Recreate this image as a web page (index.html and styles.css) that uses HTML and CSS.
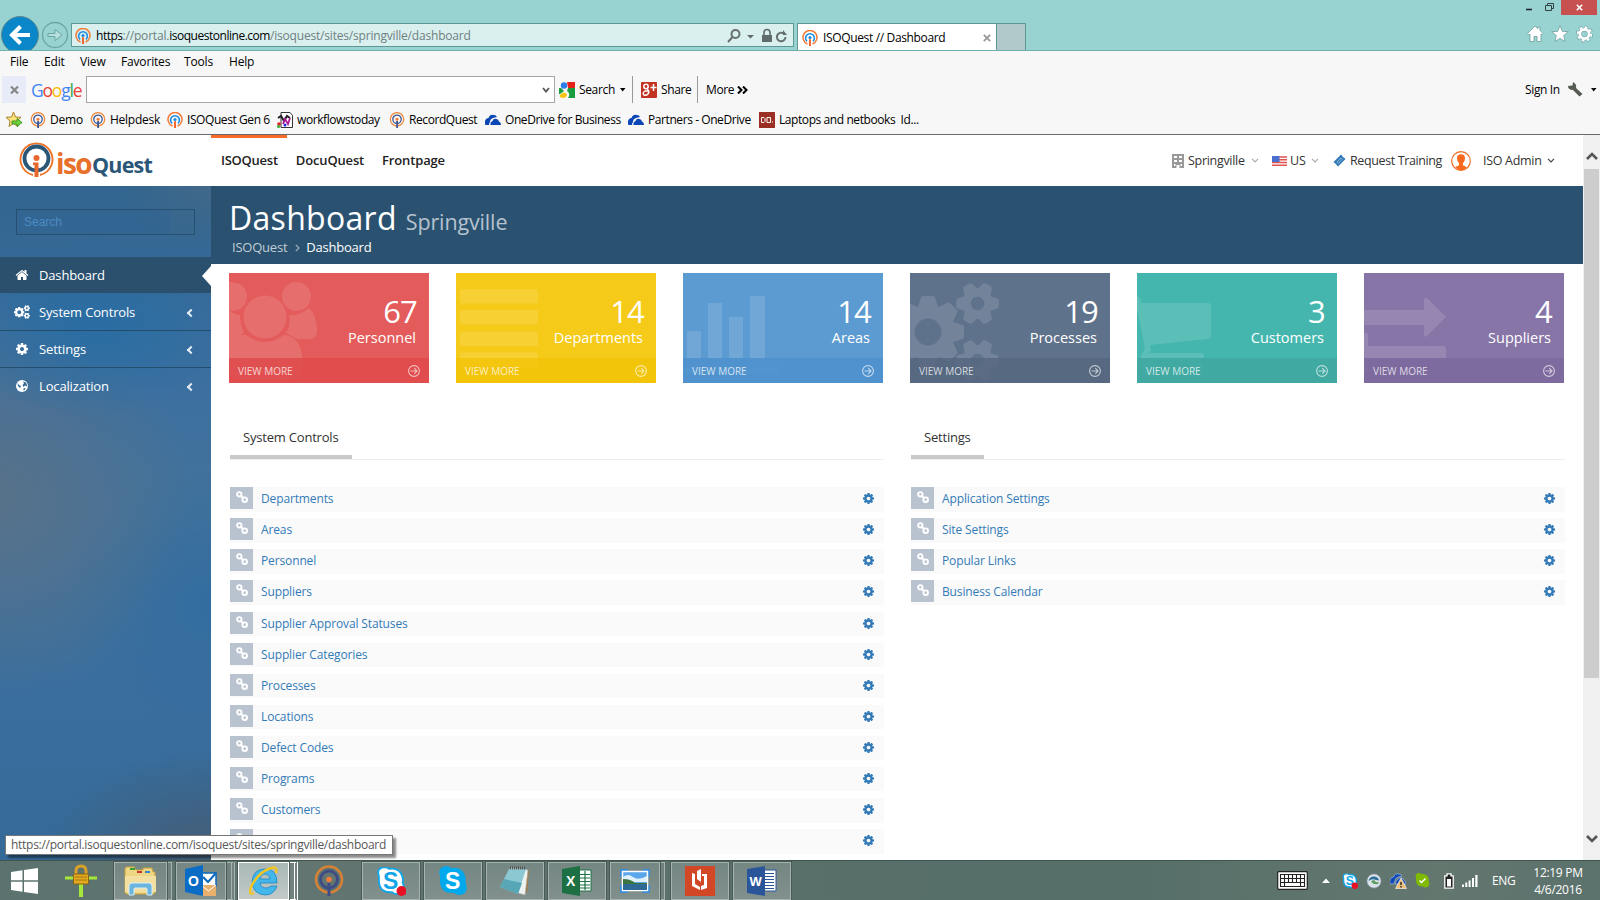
FILE: index.html
```html
<!DOCTYPE html>
<html lang="en">
<head>
<meta charset="utf-8">
<title>ISOQuest // Dashboard</title>
<link rel="stylesheet" href="styles.css">
</head>
<body>
<svg class="defs" width="0" height="0" aria-hidden="true">
  <symbol id="cog" viewBox="0 0 1792 1792"><path d="M1152 896q0-106-75-181t-181-75-181 75-75 181 75 181 181 75 181-75 75-181zm512-109v222q0 12-8 23t-20 13l-185 28q-19 54-39 91 35 50 107 138 10 12 10 25t-9 23q-27 37-99 108t-94 71q-12 0-26-9l-138-108q-44 23-91 38-16 136-29 186-7 28-36 28h-222q-14 0-24.500-8.500t-11.500-21.500l-28-184q-49-16-90-37l-141 107q-10 9-25 9-14 0-25-11-126-114-165-168-7-10-7-23 0-12 8-23 15-21 51-66.500t54-70.500q-27-50-41-99l-183-27q-13-2-21-12.500t-8-23.500v-222q0-12 8-23t19-13l186-28q14-46 39-92-40-57-107-138-10-12-10-24 0-10 9-23 26-36 98.500-107.500t94.500-71.500q13 0 26 10l138 107q44-23 91-38 16-136 29-186 7-28 36-28h222q14 0 24.500 8.500t11.500 21.500l28 184q49 16 90 37l142-107q9-9 24-9 13 0 25 10 129 119 165 170 7 8 7 22 0 12-8 23-15 21-51 66.500t-54 70.500q26 50 41 98l183 28q13 2 21 12.500t8 23.500z"/></symbol>
  <symbol id="home" viewBox="0 0 1792 1792"><path d="M1472 992v480q0 26-19 45t-45 19h-384v-384h-256v384h-384q-26 0-45-19t-19-45v-480q0-1 .5-3t.5-3l575-474 575 474q1 2 1 6zm223-69l-62 74q-8 9-21 11h-3q-13 0-21-7l-692-577-692 577q-12 8-24 7-13-2-21-11l-62-74q-8-10-7-23.500t11-21.500l719-599q32-26 76-26t76 26l244 204v-195q0-14 9-23t23-9h192q14 0 23 9t9 23v408l219 182q10 8 11 21.500t-7 23.500z"/></symbol>
  <symbol id="gear8" viewBox="-36 -36 72 72"><circle r="20" fill="none" stroke="currentColor" stroke-width="13"/><g fill="currentColor"><path id="t8" d="M-11-23L-7-34Q-7-36-5-36H5Q7-36 7-34L11-23z"/><use href="#t8" transform="rotate(45)"/><use href="#t8" transform="rotate(90)"/><use href="#t8" transform="rotate(135)"/><use href="#t8" transform="rotate(180)"/><use href="#t8" transform="rotate(225)"/><use href="#t8" transform="rotate(270)"/><use href="#t8" transform="rotate(315)"/></g></symbol>
  <symbol id="gear6" viewBox="-22 -22 44 44"><circle r="11" fill="none" stroke="currentColor" stroke-width="8.500"/><g fill="currentColor" transform="rotate(30)"><path id="t6" d="M-7.500-12L-5-20.500Q0-22.500 5-20.500L7.500-12z"/><use href="#t6" transform="rotate(60)"/><use href="#t6" transform="rotate(120)"/><use href="#t6" transform="rotate(180)"/><use href="#t6" transform="rotate(240)"/><use href="#t6" transform="rotate(300)"/></g></symbol>
  <symbol id="link" viewBox="0 0 12 12"><g fill="none" stroke="#fff" stroke-width="1.900"><circle cx="3.300" cy="3.300" r="2.200"/><circle cx="8.700" cy="8.700" r="2.300"/><path d="M4.500 4.500l3 3"/></g></symbol>
  <symbol id="iq" viewBox="0 0 16 16"><g fill="none"><path d="M5.500 14A7 7 0 1 1 10.500 14" stroke="#f47a35" stroke-width="1.500"/><path d="M5 11.300A4.400 4.400 0 1 1 11 11.300" stroke="#1d8be0" stroke-width="1.600"/></g><circle cx="8" cy="7.500" r="1.600" fill="#1d8be0"/><path d="M7 9.300h2V16H7z" fill="#f4662a"/></symbol>
  <symbol id="iqd" viewBox="0 0 16 16"><circle cx="8" cy="7.300" r="6.700" fill="none" stroke="#f08a3c" stroke-width="1.300"/><circle cx="8" cy="7.300" r="4.200" fill="none" stroke="#3f5694" stroke-width="1.300"/><circle cx="8" cy="7.300" r="1.500" fill="#f47a35"/><path d="M7.200 9h1.800v7H7.200z" fill="#3f5694"/></symbol>
  <symbol id="cloud" viewBox="0 0 16 12"><path fill="#0d47b5" d="M0 10.500V7q1-3 3.500-3Q5 0 9 1q2 0 3 2L8 4Q5 5 5 8q-1 1-1 3H1zM5.500 11q-.5-3 2-4 1-3 4-2 2 0 2.500 2.500Q16 8 16 11z"/></symbol>
  <symbol id="go" viewBox="0 0 12 12"><g fill="none" stroke="#fff"><circle cx="6" cy="6" r="5.400" stroke-width="1.100"/><path d="M2.500 6h6.500M6.300 3.200L9 6 6.300 8.800" stroke-width="1.100"/></g></symbol>
  <symbol id="chev" viewBox="0 0 8 5"><path d="M1 .8l3 3 3-3" fill="none" stroke="currentColor" stroke-width="1.200"/></symbol>
  <symbol id="skype" viewBox="0 0 30 30"><path d="M8 0q3 0 5 2 13-2 15 12-1 2 0 4 3 10-7 11-3 0-5-2Q2 28 2 14q0-2 0-4Q-1 1 8 0z"/></symbol>
</svg>

<header class="titlebar">
  <div class="history">
    <svg width="71" height="50" viewBox="0 0 71 50"><circle cx="20" cy="35" r="18.500" fill="#0a87c9" stroke="#60888f"/><path d="M30 35H12M20.500 26.500L12 35l8.500 8.500" fill="none" stroke="#fff" stroke-width="4"/><circle cx="55" cy="35" r="12.500" fill="none" stroke="#6ba5a5" stroke-width="1.300"/><path d="M48 33.500h7v-4.200l7 5.700-7 5.700v-4.200h-7z" fill="#b7dfde" stroke="#6ba5a5"/></svg>
  </div>
  <div class="address">
    <svg class="fav"><use href="#iq"/></svg>
    <span class="url"><b>https</b>://portal.<b>isoquestonline.com</b>/isoquest/sites/springville/dashboard</span>
    <svg class="addr-icons" width="61" height="16" viewBox="0 0 61 16"><g fill="none" stroke="#667070" stroke-width="2"><circle cx="8.500" cy="6" r="4"/><path d="M5.500 9L1 14"/><path d="M58.500 9a4.300 4.300 0 1 1-1.800-3.500"/></g><path d="M20 7h7l-3.500 3.500zM56 2v5h4zM35 7h10v7H35z" fill="#606c6c"/><path d="M37 7V4.500a3 3 0 0 1 6 0V7" fill="none" stroke="#606c6c" stroke-width="1.600"/></svg>
  </div>
  <div class="tab"><svg class="fav"><use href="#iq"/></svg><span>ISOQuest // Dashboard</span><svg width="8" height="8" viewBox="0 0 8 8"><path d="M.8.8l6.400 6.400M7.200.8L.8 7.200" stroke="#999" stroke-width="1.800"/></svg></div>
  <div class="newtab"></div>
  <div class="chrome">
    <div class="winbtns">
      <svg width="36" height="15" viewBox="0 0 36 15"><path d="M1 9.500h6" stroke="#223" stroke-width="1.600"/><g fill="none" stroke="#344"><path d="M20.500 5.500h6v5h-6zM22.500 5V3.500h6v5H27"/></g></svg>
      <div class="close"><svg width="7" height="7" viewBox="0 0 7 7"><path d="M.8.8l5.400 5.400M6.200.8L.8 6.200" stroke="#fff" stroke-width="1.600"/></svg></div>
    </div>
    <svg class="chrome-icons" width="68" height="18" viewBox="0 0 68 18"><g fill="#fff" stroke="#6d9d9d" stroke-width=".8"><path d="M9 1l3 2.600V2h2v3.500L17 8.500l-1 1.200-1-.7v7.500h-4v-5H8v5H4V9l-1.200.7L1.500 8.500z"/><path d="M34 .8l2.300 5.500 6 .4-4.600 3.900 1.500 6L34 13.300l-5.200 3.300 1.500-6-4.600-3.900 6-.4z"/></g><circle cx="58.500" cy="9" r="4.600" fill="none" stroke="#7aa9a9" stroke-width="4"/><circle cx="58.500" cy="9" r="7.100" fill="none" stroke="#7aa9a9" stroke-width="3" stroke-dasharray="3.400 2.176" stroke-dashoffset=".3"/><circle cx="58.500" cy="9" r="4.600" fill="none" stroke="#fff" stroke-width="2.700"/><circle cx="58.500" cy="9" r="6.600" fill="none" stroke="#fff" stroke-width="2.200" stroke-dasharray="2.600 2.583"/></svg>
  </div>
</header>

<section class="bars">
  <nav class="menubar"><span>File</span><span>Edit</span><span>View</span><span>Favorites</span><span>Tools</span><span>Help</span></nav>
  <div class="google">
    <div class="gx"><svg width="9" height="8" viewBox="0 0 9 8"><path d="M1 .5l7 7M8 .5l-7 7" stroke="#888" stroke-width="2.200"/></svg></div>
    <div class="glogo"><i class="b">G</i><i class="r">o</i><i class="y">o</i><i class="b">g</i><i class="g">l</i><i class="r">e</i></div>
    <div class="gfield"><svg width="8" height="6" viewBox="0 0 8 6"><path d="M1 1l3 3.500L7 1" fill="none" stroke="#555" stroke-width="1.800"/></svg></div>
    <svg class="gs" width="16" height="16" viewBox="0 0 16 16"><path fill="#e62117" d="M8 0h8v6H9z"/><path fill="#1a9d3e" d="M9 6h7v10H9q3-4-1-7z"/><path fill="#f9c513" d="M2 12q3-3 6 0 0 4-4 4T1 13z"/><circle cx="5" cy="3.500" r="3.200" fill="#2b7de9"/><path fill="#1a9d3e" d="M0 6h2l3 3-4 3H0z"/></svg>
    <span class="gsearch">Search</span><svg class="caret" viewBox="0 0 6 4"><path d="M0 0h5.500L2.700 3.500z"/></svg>
    <span class="rule"></span>
    <svg class="gp" width="16" height="16" viewBox="0 0 16 16"><rect width="16" height="16" rx="1" fill="#c23321"/><g fill="none" stroke="#fff" stroke-width="1.500"><circle cx="5" cy="4.500" r="2.200"/><path d="M6 7q3 2 1 5-2 2-4 1-2-2 1-4l3 0M12.500 2v7M9.500 5.500h6"/></g></svg>
    <span class="gshare">Share</span><span class="rule"></span><span class="gmore">More</span>
    <svg width="11" height="8" viewBox="0 0 11 8"><path d="M1 .5L4.500 4 1 7.500M6 .5L9.500 4 6 7.500" fill="none" stroke="#000" stroke-width="2"/></svg>
    <span class="signin">Sign In</span>
    <svg width="15" height="15" viewBox="0 0 15 15"><path d="M0 4q0 4 5 4l6.500 6.500 3-2.500L8 6q1-4-3-6L4.500 3.500z" fill="#555a52"/></svg>
    <svg class="caret last" viewBox="0 0 6 4"><path d="M0 0h5.500L2.700 3.500z"/></svg>
  </div>
  <div class="favorites">
    <svg class="star" width="17" height="17" viewBox="0 0 17 17"><path d="M7.500 1l2 5 5.500.3-4 3.800 1 5.400-4.500-3-4.500 3 1-5.400-4-3.800L5.500 6z" fill="#fbe27a" stroke="#a9852c"/><path d="M6 10h5V7.500l5 4-5 4V13H6z" fill="#6ed23b" stroke="#2c8a1c" stroke-width=".8"/></svg>
    <span><svg><use href="#iqd"/></svg>Demo</span>
    <span><svg><use href="#iqd"/></svg>Helpdesk</span>
    <span><svg><use href="#iq"/></svg>ISOQuest Gen 6</span>
    <span><svg viewBox="0 0 16 16"><path d="M4 .5h9l2.500 3v12H4z" fill="#fff" stroke="#333"/><path d="M1 6l3-2 3 5 3-5 3 2" fill="none" stroke="#222" stroke-width="2"/><path d="M6 12l2-5 3 5 2-6" fill="none" stroke="#b0189c" stroke-width="1.800"/><circle cx="2" cy="12" r="1.800" fill="#d22"/><circle cx="1.500" cy="14.500" r="1.500" fill="#3a3"/><circle cx="8" cy="13" r="1.500" fill="#22d"/></svg>workflowstoday</span>
    <span><svg><use href="#iqd"/></svg>RecordQuest</span>
    <span><svg><use href="#cloud"/></svg>OneDrive for Business</span>
    <span><svg><use href="#cloud"/></svg>Partners - OneDrive</span>
    <span><svg viewBox="0 0 16 16"><path fill="#9c2f24" d="M0 0h16v16H0z"/><path d="M2.500 5.500h2.500l1 1v3l-1 1H2.500zM8 5.500h3.500v5H8zM13.500 9.500v1" fill="none" stroke="#fff"/></svg>Laptops and netbooks&nbsp; Id...</span>
  </div>
</section>

<div class="viewport">
  <div class="page">
    <header class="topnav">
      <div class="logo">
        <svg width="35" height="37" viewBox="0 0 35 37"><g fill="none"><path d="M14 34A16 16 0 1 1 21 34" stroke="#ee7429" stroke-width="1.900"/><circle cx="17.500" cy="17.500" r="12" stroke="#2a5678" stroke-width="3.800"/></g><circle cx="17.500" cy="17" r="3" fill="#e8692d"/><path d="M14 21.500h5.500V36h-4V24H14z" fill="#e8692d"/></svg>
        <span class="iso">iso</span><span class="quest">Quest</span>
      </div>
      <nav class="tabs"><a class="on">ISOQuest</a><a>DocuQuest</a><a>Frontpage</a></nav>
      <div class="tools">
        <svg width="12" height="14" viewBox="0 0 12 14"><path fill="#999" fill-rule="evenodd" d="M0 0h12v14H7.500v-3h-3v3H0zM2 2v2h3V2zm5 0v2h3V2zM2 6v2h3V6zm5 0v2h3V6zM2 10v2h1.500v-2zm6.500 0v2H10v-2z"/></svg>
        <span class="w1">Springville</span><svg class="cv"><use href="#chev"/></svg>
        <svg class="flag" width="15" height="10" viewBox="0 0 15 10"><path fill="#fff" d="M0 0h15v10H0z"/><path d="M0 1h15M0 3.800h15M0 6.500h15M0 9.200h15" stroke="#e2524f" stroke-width="1.500"/><path fill="#4b6fd0" d="M0 0h7.500v6H0z"/></svg>
        <span class="w2">US</span><svg class="cv"><use href="#chev"/></svg>
        <svg class="ticket" width="13" height="13" viewBox="0 0 13 13"><path d="M.5 8L8 .5l1.500 1.500q0 1.500 1.500 1.500L12.500 5 5 12.500 3.500 11Q3.500 9.500 2 9.500z" fill="#337ab7"/><path d="M4 8l4-4 1.300 1.300-4 4z" fill="none" stroke="#9cc4e4" stroke-width=".8"/></svg>
        <span class="w3">Request Training</span>
        <svg width="20" height="20" viewBox="0 0 20 20"><circle cx="10" cy="10" r="9.300" fill="#fff" stroke="#f36a24" stroke-width="1.200"/><path d="M10 3.200q4 0 4 4 0 3-2 5v2l4 2q-2.500 3-6 3t-6-3l4-2v-2q-2-2-2-5 0-4 4-4z" fill="#f86a1e"/></svg>
        <span class="w4">ISO Admin</span><svg class="cv dark"><use href="#chev"/></svg>
      </div>
    </header>
    <div class="body">
      <aside class="sidebar">
        <div class="search"><span>Search</span><i></i></div>
        <ul>
          <li class="active"><svg viewBox="0 0 1792 1792"><use href="#home"/></svg>Dashboard</li>
          <li><svg class="cogs" viewBox="0 0 16 14"><use href="#gear8" x="0" y="2" width="10.500" height="10.500"/><use href="#gear6" x="9.600" y="0" width="6.400" height="6.400"/><use href="#gear6" x="9.600" y="7.500" width="6.400" height="6.400"/></svg>System Controls<b></b></li>
          <li><svg viewBox="0 0 1792 1792"><use href="#cog"/></svg>Settings<b></b></li>
          <li><svg viewBox="0 0 14 14"><circle cx="7" cy="7" r="6" fill="#fff"/><path d="M2.500 4l1.500 2 2 1-1 2-2-2zM8 2.500l3 1 1.500 4L10 6.500 8.500 8 7.500 6 9 4.500zM8 10l2-1 .5 1-1.500 1.500z" fill="#356a97"/></svg>Localization<b></b></li>
        </ul>
      </aside>
      <main>
        <div class="head"><h1>Dashboard<small>Springville</small></h1><div class="crumbs"><span>ISOQuest</span><svg width="5" height="8" viewBox="0 0 5 8"><path d="M.8.8L4 4 .8 7.200" fill="none" stroke="#9fb4c3" stroke-width="1.200"/></svg><b>Dashboard</b></div></div>
        <div class="tiles">
          <div class="tile red"><svg class="art" viewBox="0 0 200 110"><g fill="#fff"><circle cx="36" cy="44" r="21.500"/><circle cx="67.500" cy="23.500" r="14.500"/><path d="M0 9Q17 9 18 23 17 37 3 38L0 37zM60 42Q71 43 80 35 88 42 88 58 88 66 80 66H68L57 60Q62 52 60 42zM0 37Q5 42 11 42 11 52 15 60L4 66H0zM17 62Q36 76 55 62 74 63 74 94 73 107 58 107H14Q0 107 0 94V66Q8 61 17 62z"/></g></svg><strong>67</strong><em>Personnel</em><div>VIEW MORE<svg><use href="#go"/></svg></div></div>
          <div class="tile yellow"><svg class="art" viewBox="0 0 200 110"><g fill="#fff"><rect x="4" y="16" width="78" height="14.500" rx="2"/><rect x="4" y="37" width="78" height="14.500" rx="2"/><rect x="4" y="58.500" width="78" height="14.500" rx="2"/><rect x="4" y="79.500" width="78" height="14.500" rx="2"/></g></svg><strong>14</strong><em>Departments</em><div>VIEW MORE<svg><use href="#go"/></svg></div></div>
          <div class="tile blue"><svg class="art" viewBox="0 0 200 110"><path fill="#fff" d="M4 58h14v28H4zM25 30h14v56H25zM46 44h14v42H46zM67 23h15v63H67zM0 94h96v7H0z"/></svg><strong>14</strong><em>Areas</em><div>VIEW MORE<svg><use href="#go"/></svg></div></div>
          <div class="tile slate"><svg class="art" viewBox="0 0 200 110"><g color="#fff"><use href="#gear8" x="-18" y="23" width="72" height="72"/><use href="#gear6" x="45.500" y="8.500" width="44" height="44"/><use href="#gear6" x="45.500" y="65.500" width="44" height="44"/></g></svg><strong>19</strong><em>Processes</em><div>VIEW MORE<svg><use href="#go"/></svg></div></div>
          <div class="tile teal"><svg class="art" viewBox="0 0 200 110"><g fill="#fff"><path d="M0 23Q3 23 4 30H71Q74 30 74 33V62Q74 65 71 66L13 72 14 77 12 80H64Q67 80 67 83 67 87 64 87H7Q3 87 4 83L8 75 0 36z"/><circle cx="11" cy="94" r="7.500"/><circle cx="60" cy="94" r="7.500"/></g></svg><strong>3</strong><em>Customers</em><div>VIEW MORE<svg><use href="#go"/></svg></div></div>
          <div class="tile purple"><svg class="art" viewBox="0 0 200 110"><path fill="#fff" d="M0 37H60V27Q60 24 63 25L82 44 63 63Q60 65 60 62V52H0zM0 60Q4 59 4 62V73H79Q82 73 82 76V87H4V100H0z"/></svg><strong>4</strong><em>Suppliers</em><div>VIEW MORE<svg><use href="#go"/></svg></div></div>
        </div>
        <div class="columns">
          <section><div class="tabhead"><h2 class="sc">System Controls</h2></div>
            <ul class="list">
              <li><i><svg><use href="#link"/></svg></i><a>Departments</a><svg class="c"><use href="#cog"/></svg></li>
              <li><i><svg><use href="#link"/></svg></i><a>Areas</a><svg class="c"><use href="#cog"/></svg></li>
              <li><i><svg><use href="#link"/></svg></i><a>Personnel</a><svg class="c"><use href="#cog"/></svg></li>
              <li><i><svg><use href="#link"/></svg></i><a>Suppliers</a><svg class="c"><use href="#cog"/></svg></li>
              <li><i><svg><use href="#link"/></svg></i><a>Supplier Approval Statuses</a><svg class="c"><use href="#cog"/></svg></li>
              <li><i><svg><use href="#link"/></svg></i><a>Supplier Categories</a><svg class="c"><use href="#cog"/></svg></li>
              <li><i><svg><use href="#link"/></svg></i><a>Processes</a><svg class="c"><use href="#cog"/></svg></li>
              <li><i><svg><use href="#link"/></svg></i><a>Locations</a><svg class="c"><use href="#cog"/></svg></li>
              <li><i><svg><use href="#link"/></svg></i><a>Defect Codes</a><svg class="c"><use href="#cog"/></svg></li>
              <li><i><svg><use href="#link"/></svg></i><a>Programs</a><svg class="c"><use href="#cog"/></svg></li>
              <li><i><svg><use href="#link"/></svg></i><a>Customers</a><svg class="c"><use href="#cog"/></svg></li>
              <li><i><svg><use href="#link"/></svg></i><a></a><svg class="c"><use href="#cog"/></svg></li>
            </ul></section>
          <section><div class="tabhead"><h2 class="st">Settings</h2></div>
            <ul class="list">
              <li><i><svg><use href="#link"/></svg></i><a>Application Settings</a><svg class="c"><use href="#cog"/></svg></li>
              <li><i><svg><use href="#link"/></svg></i><a>Site Settings</a><svg class="c"><use href="#cog"/></svg></li>
              <li><i><svg><use href="#link"/></svg></i><a>Popular Links</a><svg class="c"><use href="#cog"/></svg></li>
              <li><i><svg><use href="#link"/></svg></i><a>Business Calendar</a><svg class="c"><use href="#cog"/></svg></li>
            </ul></section>
        </div>
      </main>
    </div>
  </div>
  <div class="scroll"><svg viewBox="0 0 12 8"><path d="M1 7l5-5 5 5" /></svg><div class="thumb"></div><svg class="down" viewBox="0 0 12 8"><path d="M1 1l5 5 5-5"/></svg></div>
  <div class="status">https://portal.isoquestonline.com/isoquest/sites/springville/dashboard</div>
</div>

<footer class="taskbar">
  <div class="start"><svg width="27" height="26" viewBox="0 0 27 26"><path fill="#fff" d="M0 4l11.500-1.700v10H0zM13 2.100L27 0v12.300H13zM0 13.700h11.500v10L0 22zM13 13.700h14V26l-14-2.100z"/></svg></div>
  <div class="lock"><svg width="32" height="34" viewBox="0 0 32 34"><path d="M0 14h32" stroke="#a6e83a" stroke-width="3"/><path d="M16 18v15" stroke="#a6e83a" stroke-width="4"/><path d="M11 11V7q0-5 5-5t5 5v4" fill="none" stroke="#d9a127" stroke-width="3"/><rect x="8.500" y="10" width="15" height="10" rx="1" fill="#e3a91f" stroke="#8a6210"/><path d="M10 13h12M10 16h12" stroke="#a87816"/></svg></div>
  <div class="app s1"><svg width="34" height="30" viewBox="0 0 34 30"><path d="M1 3q0-2 2-2h7l2 3h7V2h9l1 4h2v20q0 2-2 2H3q-2 0-2-2z" fill="#efd685" stroke="#c7a23e"/><path d="M6 2h5v2H6z" fill="#34a034"/><path d="M13 5h5v2h-5z" fill="#c33"/><path d="M21 5h5v2h-5z" fill="#38c"/><path d="M1 10h31v16H1z" fill="#f3e0a0"/><path d="M5 29V20q0-3 3-3h17q3 0 3 3v9h-5v-6q0-1-1-1H11q-1 0-1 1v6z" fill="#6ab4dd" stroke="#d8f0fb"/></svg></div>
  <div class="stack k1"></div>
  <div class="app s2"><svg width="32" height="32" viewBox="0 0 32 32"><path d="M14 8h17v13H14z" fill="#fff" stroke="#0a68bf" stroke-width="1.500"/><path d="M18 12l5 5 8-9" fill="none" stroke="#0a68bf" stroke-width="2"/><path d="M16 20h15v11H16z" fill="#e8b06c"/><path d="M16 20l7.500 6 7.500-6" fill="none" stroke="#fff"/><path d="M0 4l18-4v31L0 27z" fill="#0a6cc5"/><text x="3" y="21" class="let">O</text></svg></div>
  <div class="stack k2 dbl"></div>
  <div class="app s3 on"><svg width="30" height="32" viewBox="0 0 30 32"><path d="M28 18H11q1 5 6 5 3 0 5-2h6q-3 9-12 9Q4 29 3 17 4 4 16 4t12 14zM11 14h10q-1-5-5-5t-5 5z" fill="#43b7ec" fill-rule="evenodd" stroke="#1e86bf" stroke-width=".8"/><path d="M5 28Q-2 31 3 20 10 7 22 3q7-2 5 5" fill="none" stroke="#f3c521" stroke-width="2.400"/></svg></div>
  <div class="stack k3 dbl on"></div>
  <div class="iqtask"><svg width="30" height="32" viewBox="0 0 30 32"><circle cx="15" cy="14.500" r="13" fill="none" stroke="#d98235" stroke-width="2.500"/><circle cx="15" cy="14.500" r="8.500" fill="none" stroke="#3f4c85" stroke-width="3"/><circle cx="15" cy="14.500" r="2.800" fill="#f37a3c"/><path d="M15 18v13" stroke="#3f4c85" stroke-width="3"/></svg></div>
  <div class="app w58"><svg width="30" height="30" viewBox="0 0 30 30"><use href="#skype" fill="#fff" stroke="#12a5e8" stroke-width="2" x="1" y="1" width="28" height="28"/><text x="7" y="23" class="sk">S</text><circle cx="25.500" cy="25" r="5" fill="#e81123"/></svg></div>
  <div class="app w58"><svg width="30" height="30" viewBox="0 0 30 30"><use href="#skype" fill="#00a8ec" width="30" height="30"/><text x="7" y="23" class="skw">S</text></svg></div>
  <div class="app w58"><svg width="32" height="30" viewBox="0 0 32 30"><path d="M28 4l2 1-2 21-6 3z" fill="#a67a3a"/><path d="M12 2l17 2-3 25-7-2z" fill="#eef3f2" stroke="#aaa" stroke-width=".6"/><path d="M10 3h17l-8 25L1 21z" fill="#8cc8d2"/><path d="M5 13l18 4-4 11L1 21z" fill="#58a7b6"/><path d="M11 2h16" stroke="#555" stroke-width="3" stroke-dasharray="1 1"/></svg></div>
  <div class="app w58"><svg width="30" height="30" viewBox="0 0 30 30"><path d="M16 4h13v21H16z" fill="#fff" stroke="#1d7044"/><path d="M18 8.500h10M18 12h10M18 15.500h10M18 19h10M18 22h10M23 5v19" stroke="#1d7044" stroke-width="1.200"/><path d="M0 3l18-3v30L0 27z" fill="#1d7044"/><text x="4" y="20" class="let">X</text></svg></div>
  <div class="app s4"><svg width="30" height="26" viewBox="0 0 30 26"><path d="M0 1h8v8H0zM22 1h8v8h-8zM0 17h8v8H0zM22 17h8v8h-8z" fill="#3b8bd6"/><path d="M2.500 3.500h25v19h-25z" fill="#5ba6ea" stroke="#fff" stroke-width="1.500"/><path d="M3 9q5-4 10 0t14-1v6H3z" fill="#dff0fb"/><path d="M3 11q8 0 12 4h12v2H3z" fill="#3e7440"/><path d="M3 16h24v6H3z" fill="#2f6a96"/></svg></div>
  <div class="stack k1"></div>
  <div class="app w58 m"><svg width="30" height="30" viewBox="0 0 30 30"><path fill="#d24726" d="M0 0h30v30H0z"/><path fill="#fff" d="M7 7l3 1v10l5 3v3l-8-4zM12 5l4-2v13l-4-3zM17 8h5v14l-6 2v-4l3-1V10h-2z"/></svg></div>
  <div class="app w58"><svg width="30" height="30" viewBox="0 0 30 30"><path d="M16 4h13v21H16z" fill="#fff" stroke="#2a5699"/><path d="M18 7.500h9M18 10.500h9M18 13.500h9M18 16.500h9M18 19.500h9M18 22.500h9" stroke="#2a5699"/><path d="M0 3l18-3v30L0 27z" fill="#2a5699"/><text x="2.500" y="20" class="let w">W</text></svg></div>
  <div class="tray">
    <svg width="31" height="19" viewBox="0 0 31 19"><rect x=".7" y=".7" width="29.600" height="17.600" rx="1" fill="#fff" stroke="#222" stroke-width="1.200"/><path d="M3.500 3.500h24v12h-24zM3.500 7.500h24M3.500 11.500h24M7.500 3.500v12M11.500 3.500v8M15.500 3.500v8M19.500 3.500v8M23.500 3.500v12" fill="none" stroke="#222" stroke-width="1.100"/></svg>
    <svg class="up" width="8" height="5" viewBox="0 0 8 5"><path d="M0 5l4-4.500L8 5z" fill="#fff"/></svg>
    <svg class="t1" width="16" height="16" viewBox="0 0 30 30"><use href="#skype" fill="#fff" stroke="#12a5e8" stroke-width="3" x="1" y="1" width="28" height="28"/><text x="7" y="23" class="sk">S</text><circle cx="24" cy="24" r="6" fill="#e81123"/></svg>
    <svg class="t2" width="16" height="16" viewBox="0 0 16 16"><circle cx="8" cy="8" r="7.300" fill="#dbe3e8" stroke="#6e7d8a"/><path d="M2.500 8q1-5 6-4.500 4 .5 4.500 4L10 7Q6 5 2.500 8z" fill="#2f6f9b"/><path d="M5 8q2 4 7 3l1-2q-3 1-5-2z" fill="#5d9c63"/></svg>
    <svg class="t3" width="17" height="16" viewBox="0 0 17 16"><use href="#cloud" width="16" height="12" stroke="#cfe0ff" stroke-width=".5"/><path d="M11 5l5.500 10.500h-11z" fill="#efc07a" stroke="#fff" stroke-width=".6"/><path d="M11 9v3M11 13v1.500" stroke="#222" stroke-width="1.400"/></svg>
    <svg class="t4" width="15" height="15" viewBox="0 0 30 30"><use href="#skype" fill="#7fba00" width="30" height="30"/><path d="M9 15l4 4 8-8" fill="none" stroke="#fff" stroke-width="3"/></svg>
    <svg class="t5" width="10" height="16" viewBox="0 0 10 16"><path d="M3 .8h4v2h2.200v12.400H.8V2.800H3z" fill="#222" stroke="#fff" stroke-width="1.300"/><path d="M3 6h4v7.500H3z" fill="#fff"/></svg>
    <svg class="t6" width="16" height="12" viewBox="0 0 16 12"><path d="M0 9.500h2V12H0zM3.300 7.500h2V12h-2zM6.600 5.500h2V12h-2zM10 3h2v9h-2zM13.300 0h2.200v12h-2.200z" fill="#fff"/></svg>
    <span class="eng">ENG</span>
    <div class="clock">12:19 PM<br>4/6/2016</div>
  </div>
</footer>
</body>
</html>
```
FILE: styles.css
```css
* { box-sizing: border-box; }
body { margin: 0; width: 1600px; height: 900px; overflow: hidden; display: flex; flex-direction: column; background: #fff; font: 12px/16px "Open Sans", sans-serif; color: #000; }
ul, h1, h2 { margin: 0; padding: 0; list-style: none; font-weight: 400; }
b, i, em { font-weight: 400; font-style: normal; }
svg { display: block; flex: none; }
.defs { position: absolute; }
span, a { white-space: nowrap; }

/* Browser title bar */
.titlebar { height: 51px; flex: none; display: flex; align-items: flex-end; background: #98d3d2; border-bottom: 1px solid #6fb0af; }
.titlebar > *, .google > *, .favorites > *, .tools > *, .tray > * { flex-shrink: 0; }
.history { width: 71px; }
.address { width: 723px; height: 24px; margin-bottom: 3px; border: 1px solid #5f9795; background: #daf0ef; display: flex; align-items: center; padding: 1px 5px 0 3px; }
.fav { width: 16px; height: 16px; margin-right: 5px; }
.url { flex: 1; color: #6f8080; letter-spacing: -.19px; }
.url b { color: #000; letter-spacing: -.48px; }
.tab { width: 200px; height: 27px; margin-left: 3px; border: 1px solid #5f9795; border-bottom: 0; background: #fff; display: flex; align-items: center; padding: 2px 5px 0 4px; }
.tab span { flex: 1; letter-spacing: -.35px; }
.newtab { width: 29px; height: 27px; background: #b1c9ca; border: 1px solid #5f9795; border-width: 1px 1px 0 0; }
.chrome { margin-left: auto; height: 50px; width: 77px; padding-right: 3px; }
.winbtns { display: flex; height: 15px; justify-content: flex-end; }
.close { width: 36px; height: 15px; background: #c75050; display: grid; place-items: center; }
.chrome-icons { margin: 10px 0 0 3px; }

/* Menus and toolbars */
.bars { height: 84px; flex: none; background: #f7f7f7; border-bottom: 1px solid #6b6b6b; }
.menubar { height: 25px; padding: 3px 0 0 10px; display: flex; letter-spacing: -.17px; }
.menubar span:nth-child(1) { width: 34px; }
.menubar span:nth-child(2) { width: 36px; }
.menubar span:nth-child(3) { width: 41px; }
.menubar span:nth-child(4) { width: 63px; }
.menubar span:nth-child(5) { width: 45px; }
.google { height: 27px; display: flex; align-items: center; padding-left: 2px; letter-spacing: -.35px; }
.gx { width: 24px; height: 27px; background: #e8ecf9; display: grid; place-items: center; }
.glogo { width: 60px; padding-left: 5px; font: 17.5px/24px "Open Sans", sans-serif; letter-spacing: -1.2px; }
.b { color: #4285f4; } .r { color: #ea4335; } .y { color: #fbbc05; } .g { color: #34a853; }
.gfield { width: 469px; height: 27px; border: 1px solid #a5a5aa; background: #fff; display: flex; align-items: center; justify-content: flex-end; padding-right: 4px; }
.gs { margin: 0 4px; }
.gsearch { width: 38px; }
.google .caret { width: 6px; height: 4px; margin-left: 3px; }
.rule { width: 1px; height: 27px; background: #999; margin-left: 6px; }
.gp { margin: 0 4px 0 8px; }
.gshare { width: 30px; }
.gmore { width: 31px; margin-left: 8px; }
.signin { margin-left: auto; width: 43px; }
.google .caret.last { margin: 0 3px 0 8px; }
.favorites { display: flex; align-items: center; height: 31px; padding: 2px 0 0 6px; letter-spacing: -.42px; }
.star { margin-right: 7px; }
.favorites span { display: flex; align-items: center; gap: 4px; }
.favorites span svg { width: 16px; height: 16px; }
.favorites span:nth-of-type(1) { width: 60px; letter-spacing: -.2px; }
.favorites span:nth-of-type(2) { width: 77px; letter-spacing: -.25px; }
.favorites span:nth-of-type(3) { width: 110px; }
.favorites span:nth-of-type(4) { width: 112px; }
.favorites span:nth-of-type(5) { width: 96px; }
.favorites span:nth-of-type(6) { width: 143px; }
.favorites span:nth-of-type(7) { width: 131px; }

/* Page */
.viewport { height: 725px; flex: none; display: flex; position: relative; overflow: hidden; }
.page { width: 1583px; height: 725px; overflow: hidden; }
.topnav { height: 51px; display: flex; align-items: stretch; font-size: 13px; }
.logo { width: 211px; padding: 6px 0 0 19px; display: flex; font-weight: 700; }
.iso { color: #e8702a; font-size: 28px; line-height: 44px; letter-spacing: -1.6px; margin-left: 2px; }
.quest { color: #2a5678; font-size: 21.5px; line-height: 48px; letter-spacing: -.8px; margin-left: 1px; }
.tabs { display: flex; font-weight: 600; letter-spacing: -.15px; color: #222; line-height: 45px; }
.tabs a { border-top: 3px solid transparent; padding: 0 9px; }
.tabs .on { border-color: #f86a2a; padding-left: 10px; letter-spacing: -.25px; }
.tools { margin-left: auto; width: 411px; display: flex; align-items: center; color: #333; font-size: 12.5px; line-height: 49px; letter-spacing: -.2px; }
.w1 { width: 63px; margin-left: 4px; letter-spacing: -.3px; }
.cv { width: 8px; height: 5px; color: #aaa; }
.flag { margin: 0 3px 0 13px; }
.w2 { width: 21px; }
.ticket { margin: 0 4px 0 14px; }
.w3 { width: 101px; letter-spacing: -.38px; }
.w4 { width: 64px; margin-left: 12px; letter-spacing: -.3px; }
.cv.dark { color: #444; }
.body { display: flex; height: 674px; }

.sidebar { width: 211px; flex: none; padding-top: 23px; color: #fff; background: radial-gradient(ellipse 150px 90px at 95px 140px, #2b6da2 10%, transparent), radial-gradient(ellipse 190px 200px at 0 310px, #56718a 5%, transparent), radial-gradient(ellipse 150px 140px at 211px 420px, #336d9f 10%, transparent), radial-gradient(ellipse 170px 110px at 211px 674px, #435f7b 20%, transparent), radial-gradient(ellipse 90px 60px at 211px 0, #40688a 10%, transparent), linear-gradient(#32658f, #3d70a0 30%, #44739b 50%, #3a6e9e 75%, #346a98); }
.search { width: 179px; height: 26px; margin: 0 0 22px 16px; border: 1px solid #25506f; background: rgba(50,100,145,.5); display: flex; align-items: center; padding-left: 7px; font: 12px/16px "Liberation Sans", sans-serif; color: #4a8cc4; }
.search i { margin-left: auto; width: 23px; height: 24px; background: rgba(60,105,140,.6); }
.sidebar li { height: 37px; border-bottom: 1px solid #234e70; display: flex; align-items: center; padding-left: 15px; font-size: 13px; letter-spacing: -.15px; position: relative; }
.sidebar li:last-child { border: 0; height: 36px; }
.sidebar li svg { width: 14px; height: 14px; margin-right: 10px; fill: #fff; color: #fff; }
.sidebar li svg.cogs { width: 16px; margin: 0 9px 0 -1px; }
.sidebar li b { margin: 1px 17px 0 auto; width: 6px; height: 6px; border: solid #e5edf4; border-width: 0 0 2px 2px; transform: rotate(45deg); }
.sidebar .active { height: 36px; margin-bottom: 1px; background: #2a506e; border: 0; }
.active::after { content: ""; position: absolute; right: 0; top: 9px; border: solid transparent; border-width: 10px 9px 10px 0; border-right-color: #fff; }

main { flex: 1; }
.head { height: 78px; background: #2a5270; color: #fff; padding: 10px 0 0 18px; }
h1 { font-size: 32px; line-height: 44px; letter-spacing: .3px; }
h1 small { font-size: 21.5px; color: #b6c3cf; margin-left: 9px; letter-spacing: -.15px; }
.crumbs { display: flex; align-items: center; padding-left: 3px; margin-top: -4px; font-size: 13px; line-height: 15px; letter-spacing: -.22px; color: #c1cdd6; }
.crumbs svg { margin: 0 6px 0 8px; }
.crumbs b { color: #fff; }
.tiles { display: flex; gap: 27px; padding: 9px 18px 0; }
.tile { width: 200px; height: 110px; position: relative; color: #fff; text-align: right; display: flex; flex-direction: column; padding-top: 22px; }
.tile strong { font-size: 31px; line-height: 33px; font-weight: 400; padding-right: 12px; letter-spacing: -.8px; }
.tile em { font-size: 14.5px; line-height: 20px; padding-right: 13px; }
.tile div { margin-top: auto; height: 25px; display: flex; align-items: center; justify-content: space-between; padding: 1px 9px 0 9px; font-size: 10px; color: rgba(255,255,255,.75); }
.tile div svg { width: 12px; height: 12px; opacity: .65; }
.art { position: absolute; inset: 0; width: 200px; height: 110px; opacity: .12; }
.tile strong, .tile em, .tile div { position: relative; }
.red { background: #e35b5a; } .red div { background: rgba(224,73,73,.8); }
.yellow { background: #f6ca18; } .yellow div { background: rgba(242,195,8,.8); }
.blue { background: #5c9bd1; } .blue div { background: rgba(76,145,205,.85); }
.slate { background: #5f728b; } .slate div { background: rgba(86,103,127,.85); }
.teal { background: #44b6ae; } .teal div { background: rgba(62,167,160,.85); }
.purple { background: #8775a7; } .purple div { background: rgba(124,105,157,.9); }

.columns { display: flex; gap: 27px; padding: 41px 18px 0 19px; }
.columns section { width: 654px; }
.tabhead { height: 36px; border-bottom: 1px solid #eee; display: flex; }
h2 { height: 35px; border-bottom: 4px solid #c9c9c9; padding-left: 13px; font-size: 13px; line-height: 26px; letter-spacing: -.2px; color: #333; white-space: nowrap; }
.sc { width: 122px; }
.st { width: 73px; }
.list { padding-top: 27.22px; display: flex; flex-direction: column; gap: 6.59px; }
.list li { height: 24.5px; background: #fafafa; display: flex; align-items: flex-start; }
.list i { width: 23px; height: 22px; background: #b9c3d0; padding: 4px 0 0 6px; }
.list i svg { width: 12px; height: 12px; }
.list a { flex: 1; color: #337ab7; line-height: 24px; padding-left: 8px; letter-spacing: -.13px; }
.c { width: 13px; height: 13px; margin: 5px 9px 0 0; fill: #337ab7; }

.scroll { width: 17px; background: #f0f0f0; padding-left: 1px; display: flex; flex-direction: column; }
.scroll svg { width: 12px; height: 8px; margin: 17px 0 9px 2px; fill: none; stroke: #555; stroke-width: 2.6; }
.thumb { width: 15px; height: 509px; background: #cdcdcd; }
.scroll .down { margin: auto 0 17px 2px; }
.status { position: absolute; left: 5px; top: 700px; width: 388px; height: 20px; border: 1px solid #767676; background: #fff; box-shadow: 3px 3px 2px rgba(0,0,0,.45); padding-left: 5px; line-height: 18px; color: #575757; letter-spacing: -.28px; white-space: nowrap; }

/* Taskbar */
.taskbar { height: 40px; flex: none; display: flex; align-items: center; background: linear-gradient(90deg, #5b726e, #627570 20%, #586f6a 50%, #566f69 70%, #63776f 90%, #5b716c); border-top: 1px solid #42544f; }
.start { width: 65px; padding-left: 11px; }
.lock { width: 49px; }
.app { height: 38px; display: grid; place-items: center; background: linear-gradient(#758783, #81908c); border: 1px solid #a7b3b0; outline: 1px solid #4a5b57; }
.s1 { width: 53px; } .s2 { width: 50px; } .s3 { width: 51px; } .s4 { width: 50px; }
.stack { height: 38px; width: 4px; margin-left: 1px; border: 1px solid #a7b3b0; border-left: 0; margin-right: 4px; background: #71827e; }
.dbl { width: 8px; margin-right: 3px; border-right: 4px double #a7b3b0; }
.s3.on { background: linear-gradient(#a9b8b5, #c1cac8); border-color: #fff; }
.stack.on { border-color: #fff; margin-right: 16px; }
.iqtask { width: 48px; }
.w58 { width: 58px; margin-right: 4px; }
.w58.m { margin-left: 2px; }
.let { font: 700 14px "Liberation Sans", sans-serif; fill: #fff; }
.let.w { font-size: 13px; }
.sk, .skw { font: 700 23px "Liberation Sans", sans-serif; fill: #12a5e8; }
.skw { fill: #fff; }
.tray { margin-left: auto; width: 323px; display: flex; align-items: center; color: #fff; }
.up { margin-left: 14px; } .t1 { margin-left: 12px; } .t2 { margin-left: 8px; } .t3 { margin-left: 8px; } .t4 { margin-left: 8px; } .t5 { margin-left: 14px; } .t6 { margin-left: 8px; }
.eng { margin-left: 14px; width: 33px; letter-spacing: -.4px; }
.clock { width: 66px; text-align: center; line-height: 17px; letter-spacing: -.3px; white-space: nowrap; }
```
